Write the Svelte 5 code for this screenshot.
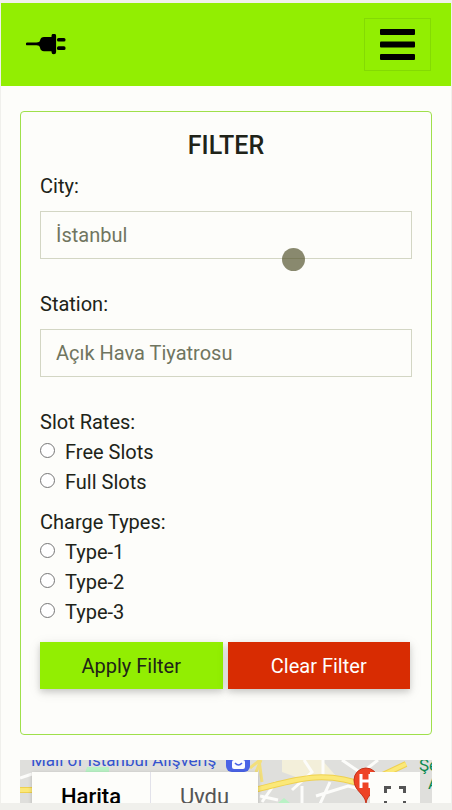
<script>
  let city = $state('');
  let station = $state('');
  const slotRates = ['Free Slots', 'Full Slots'];
  const chargeTypes = ['Type-1', 'Type-2', 'Type-3'];
</script>

<div class="screen">
  <header>
    <a class="brand" href="#home" aria-label="Home">
      <svg width="40" height="22" viewBox="0 0 40 22">
        <path d="M1.200 8.400H10.500C12.500 8.400 13.600 8 14 6.500C14.500 4 16 3 18 3H25.500V2a2.300 2.300 0 0 1 4.600 0v16a2.300 2.300 0 0 1-4.600 0V17.200H18c-2.200 0-3.700-1-4-3.700C13.600 12 12.500 11.200 10.500 11.200H1.200a1.400 1.400 0 0 1 0-2.800z" />
        <rect x="31" y="4" width="8.500" height="3.600" rx="1.500" />
        <rect x="31" y="12.300" width="8.500" height="3.600" rx="1.500" />
      </svg>
    </a>
    <button class="menu" type="button" aria-label="Menu">
      <svg width="35" height="31" viewBox="0 0 35 31">
        <rect width="35" height="6" rx="1" />
        <rect y="12.500" width="35" height="6" rx="1" />
        <rect y="25" width="35" height="6" rx="1" />
      </svg>
    </button>
  </header>

  <main>
    <form class="card">
      <h1>FILTER</h1>
      <div class="field">
        <label for="city">City:</label>
        <input id="city" type="text" placeholder="İstanbul" bind:value={city} />
        <span class="touch"></span>
      </div>
      <div class="field">
        <label for="station">Station:</label>
        <input id="station" type="text" placeholder="Açık Hava Tiyatrosu" bind:value={station} />
      </div>
      <fieldset>
        <legend>Slot Rates:</legend>
        {#each slotRates as rate}
          <label class="option"><input type="radio" name="slot" value={rate} />{rate}</label>
        {/each}
      </fieldset>
      <fieldset>
        <legend>Charge Types:</legend>
        {#each chargeTypes as type}
          <label class="option"><input type="radio" name="charge" value={type} />{type}</label>
        {/each}
      </fieldset>
      <div class="actions">
        <button class="apply" type="button">Apply Filter</button>
        <button class="clear" type="reset">Clear Filter</button>
      </div>
    </form>

    <section class="map" aria-label="Map">
      <svg class="tiles" viewBox="0 0 412 60" preserveAspectRatio="xMinYMin slice">
        <rect width="412" height="60" fill="#dfdfdc" />
        <path d="M262 0h40l14 16-32 4-22-8z" fill="#f3efda" />
        <path d="M67 7h22v6H65z" fill="#b9f2c5" />
        <path d="M258 43l6-5 6 5z" fill="#b9f2c5" />
        <g fill="none" stroke="#fcfcfa" stroke-width="3">
          <path d="M303 0v15M322 0l22 15 12 2M358 0l-18 14M284 0l8 12-20 18M256 22l-14 20M282 26v17M310 22l-10 22M296 36l32-10 24 6M240 36l18 4M0 18l12-4M398 24l-6 24" />
        </g>
        <g fill="none" stroke="#efd14f" stroke-width="6">
          <path d="M230 31C270 22 300 8 346 26" />
          <path d="M352 20L386 4M0 30h12" />
        </g>
        <g fill="none" stroke="#fbe878" stroke-width="4">
          <path d="M230 31C270 22 300 8 346 26" />
          <path d="M352 20L386 4M0 30h12" />
          <path d="M230 8l10-8M236 12l5-12M242 22l-3-22" stroke="#f2df7c" stroke-width="3" />
        </g>
        <text x="11" y="6" fill="#3453cf">Mall of İstanbul Alışveriş</text>
        <text x="399" y="11" fill="#0c8a50">Şe</text>
        <text x="408" y="29" fill="#0c8a50">A</text>
        <rect x="206" y="-14" width="24" height="26" rx="6" fill="#4a63e6" />
        <rect x="212" y="0" width="13" height="9" rx="2" fill="#fcfcff" />
        <path d="M215 3q3.500 4 7 0" fill="none" stroke="#4a63e6" stroke-width="1.500" />
        <path d="M346 43C345 34 334 31 334 20a12 12 0 0 1 24 0C358 31 347 34 346 43z" fill="#ee4426" stroke="#c5321a" />
        <path d="M341 14v14M350 14v14M341 21h9" stroke="#fff" stroke-width="3" />
      </svg>
      <div class="types">
        <button type="button" class="active">Harita</button>
        <button type="button">Uydu</button>
      </div>
      <button class="full" type="button" aria-label="Full screen">
        <svg width="22" height="22" viewBox="0 0 22 22" fill="none" stroke="#555" stroke-width="3">
          <path d="M1.500 7V1.500H7M15 1.500h5.500V7M20.500 15v5.500H15M7 20.500H1.500V15" />
        </svg>
      </button>
    </section>
  </main>
</div>

<style>
  :global(body) {
    margin: 0;
    background: #f0f0ec;
  }
  .screen {
    box-sizing: border-box;
    display: flex;
    flex-direction: column;
    height: 100vh;
    padding: 3px 1px 7px;
    font: 20px/30px Roboto, sans-serif;
    color: #202318;
  }
  button, input {
    box-sizing: border-box;
    margin: 0;
    font: inherit;
    border-radius: 0;
  }
  header {
    display: flex;
    align-items: center;
    justify-content: space-between;
    padding: 15px 20px 15px 25px;
    background: #92ee02;
  }
  .brand, .brand svg, .menu svg, .full svg {
    display: block;
  }
  .menu {
    padding: 10px 15px;
    border: 1px solid #84da04;
    background: none;
  }
  main {
    flex: 1;
    display: flex;
    flex-direction: column;
    min-height: 0;
    padding: 25px 19px 0;
    background: #fdfdfa;
    overflow: hidden;
  }
  .card {
    flex: none;
    margin: 0 0 25px;
    padding: 19px 19px 45px;
    border: 1px solid #9fe04a;
    border-radius: 4px;
  }
  h1 {
    margin: 0 0 10px;
    font-size: 25px;
    line-height: 30px;
    font-weight: 500;
    text-align: center;
  }
  .field {
    position: relative;
    display: flex;
    flex-direction: column;
    gap: 10px;
    margin-bottom: 30px;
  }
  .field input {
    width: 100%;
    height: 48px;
    padding: 0 15px;
    border: 1px solid #d3d6c4;
    background: transparent;
    color: #495057;
  }
  .field input::placeholder {
    color: #707560;
    opacity: 1;
  }
  .touch {
    position: absolute;
    left: 65%;
    bottom: -12px;
    width: 23px;
    height: 23px;
    border-radius: 50%;
    background: rgba(75, 75, 35, 0.65);
  }
  fieldset {
    margin: 0 0 10px;
    padding: 0;
    border: 0;
  }
  legend {
    padding: 0;
  }
  .option {
    display: flex;
    align-items: flex-start;
    gap: 10px;
  }
  .option input {
    appearance: none;
    width: 15px;
    height: 15px;
    margin-top: 6px;
    border: 1px solid #767676;
    border-radius: 50%;
    background: #fff;
  }
  .option input:checked {
    border: 4px solid #62a800;
  }
  .actions {
    display: flex;
    gap: 5px;
    padding: 5px 2px 0 0;
  }
  .actions button {
    flex: 1;
    height: 47px;
    padding: 0;
    border: 0;
    box-shadow: 0 3px 6px rgba(0, 0, 0, 0.14), 0 3px 12px rgba(0, 0, 0, 0.1);
  }
  .apply {
    background: #92ee02;
    color: #202318;
  }
  .clear {
    background: #d82c02;
    color: #fff;
  }
  .map {
    position: relative;
    flex: 1;
    min-height: 40px;
    overflow: hidden;
  }
  .tiles {
    display: block;
    width: 100%;
    font-size: 17px;
  }
  .types {
    position: absolute;
    top: 12px;
    left: 12px;
    display: flex;
    box-shadow: 0 1px 4px rgba(0, 0, 0, 0.2);
  }
  .types button {
    height: 50px;
    padding: 0 29px;
    border: 0;
    background: #fdfdfa;
    color: #565656;
    font-size: 22px;
  }
  .types button + button {
    border-left: 1px solid #e2e2ea;
  }
  .types .active {
    color: #000;
    font-weight: 500;
  }
  .full {
    position: absolute;
    top: 12px;
    right: 12px;
    width: 50px;
    height: 50px;
    padding: 14px;
    border: 0;
    background: #fdfdfa;
  }
</style>
